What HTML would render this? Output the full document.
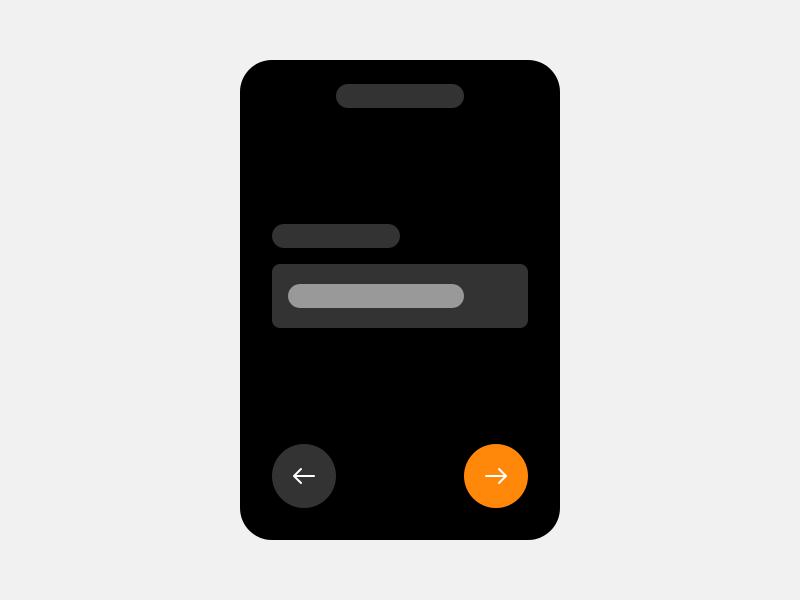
<!DOCTYPE html>
<html><head><style>
html,body{margin:0;padding:0;width:800px;height:600px;background:#f1f1f1;overflow:hidden}
.card{position:absolute;left:240px;top:60px;width:320px;height:480px;background:#000;border-radius:32px}
.p{position:absolute;border-radius:12px;background:#333}
.c{position:absolute;width:64px;height:64px;border-radius:50%;top:444px}
</style></head><body>
<div class="card"></div>
<div class="p" style="left:336px;top:84px;width:128px;height:24px"></div>
<div class="p" style="left:272px;top:224px;width:128px;height:24px"></div>
<div class="p" style="left:272px;top:264px;width:256px;height:64px;border-radius:8px"></div>
<div class="p" style="left:288px;top:284px;width:176px;height:24px;background:#999"></div>
<div class="c" style="left:272px;background:#333">
<svg width="64" height="64" viewBox="0 0 64 64"><path d="M42 32H22M29 25L22 32L29 39" stroke="#fff" stroke-width="2" fill="none" stroke-linecap="round" stroke-linejoin="round"/></svg></div>
<div class="c" style="left:464px;background:#ff870a">
<svg width="64" height="64" viewBox="0 0 64 64"><path d="M22 32H42M35 25L42 32L35 39" stroke="#fff" stroke-width="2" fill="none" stroke-linecap="round" stroke-linejoin="round"/></svg></div>
</body></html>
